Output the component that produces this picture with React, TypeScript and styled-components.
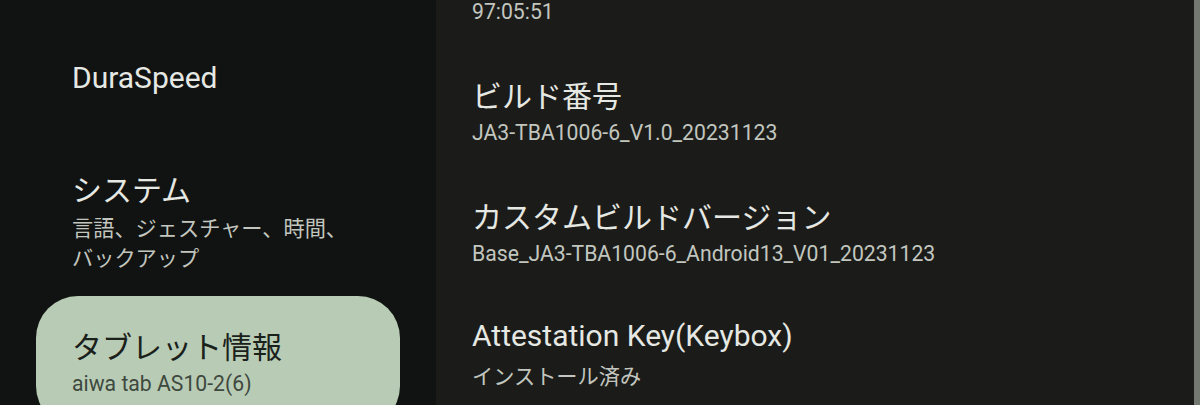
import React from "react";
import styled, { createGlobalStyle } from "styled-components";

const GlobalStyle = createGlobalStyle`
  html, body {
    margin: 0;
    padding: 0;
    background: #1b1c1a;
    overflow: hidden;
  }
  body {
    font-family: Roboto, "Noto Sans CJK JP", "Noto Sans", sans-serif;
    -webkit-font-smoothing: antialiased;
  }
`;

const latinStack = `Roboto, "Noto Sans CJK JP", "Noto Sans", sans-serif`;
const japaneseStack = `"Noto Sans CJK JP", Roboto, sans-serif`;

const isJapanese = (s: string) => /[\u3000-\u9fff]/.test(s);

const Screen = styled.div`
  display: flex;
  width: 1200px;
  height: 405px;
  overflow: hidden;
`;

const NavPane = styled.nav`
  width: 436px;
  flex: none;
  background: #111312;
  overflow: hidden;
`;

const NavList = styled.div`
  display: flex;
  flex-direction: column;
  gap: 10px;
  padding: 12px 36px 0;
`;

const NavItem = styled.div<{ $selected?: boolean }>`
  display: flex;
  flex-direction: column;
  justify-content: center;
  min-height: 132px;
  padding: 0 36px;
  box-sizing: border-box;
  border-radius: 42px;
  background: ${(p) => (p.$selected ? "#b8ccb5" : "transparent")};
`;

const Title = styled.div<{ $onCard?: boolean; $ja?: boolean }>`
  font-family: ${(p) => (p.$ja ? japaneseStack : latinStack)};
  font-size: 30px;
  line-height: 40px;
  font-weight: 400;
  color: ${(p) => (p.$onCard ? "#1a201a" : "#e6e8e3")};
  white-space: nowrap;
`;

const Summary = styled.div<{ $onCard?: boolean; $ja?: boolean }>`
  margin-top: 4px;
  font-family: ${(p) => (p.$ja ? japaneseStack : latinStack)};
  font-size: 21.2px;
  line-height: 30px;
  font-weight: 400;
  color: ${(p) => (p.$onCard ? "#3e483e" : "#c2c6bf")};
`;

const DetailPane = styled.main`
  flex: 1;
  display: flex;
  background: #1b1c1a;
  overflow: hidden;
`;

const DetailList = styled.div`
  flex: 1;
  display: flex;
  flex-direction: column;
  margin-top: -7px;
`;

const InfoRow = styled.div<{ $cut?: boolean }>`
  display: flex;
  flex-direction: column;
  padding: ${(p) => (p.$cut ? "0" : "23px")} 36px 24px;
`;

const ScrollThumb = styled.div`
  width: 6px;
  flex: none;
  background: #737870;
`;

type Item = { title: string; summary?: string[]; selected?: boolean };

const navItems: Item[] = [
  { title: "DuraSpeed" },
  { title: "システム", summary: ["言語、ジェスチャー、時間、", "バックアップ"] },
  { title: "タブレット情報", summary: ["aiwa tab AS10-2(6)"], selected: true },
];

// the first row is scrolled so that only its value remains in view
const infoRows: { title?: string; value: string }[] = [
  { value: "97:05:51" },
  { title: "ビルド番号", value: "JA3-TBA1006-6_V1.0_20231123" },
  { title: "カスタムビルドバージョン", value: "Base_JA3-TBA1006-6_Android13_V01_20231123" },
  { title: "Attestation Key(Keybox)", value: "インストール済み" },
];

export default function App() {
  return (
    <>
      <GlobalStyle />
      <Screen>
        <NavPane>
          <NavList>
            {navItems.map((it) => (
              <NavItem key={it.title} $selected={it.selected}>
                <Title $onCard={it.selected} $ja={isJapanese(it.title)}>
                  {it.title}
                </Title>
                {it.summary && (
                  <Summary $onCard={it.selected} $ja={isJapanese(it.summary.join(""))}>
                    {it.summary.map((line) => (
                      <div key={line}>{line}</div>
                    ))}
                  </Summary>
                )}
              </NavItem>
            ))}
          </NavList>
        </NavPane>
        <DetailPane>
          <DetailList>
            {infoRows.map((r) => (
              <InfoRow key={r.value} $cut={!r.title}>
                {r.title && <Title $ja={isJapanese(r.title)}>{r.title}</Title>}
                <Summary $ja={isJapanese(r.value)}>{r.value}</Summary>
              </InfoRow>
            ))}
          </DetailList>
          <ScrollThumb />
        </DetailPane>
      </Screen>
    </>
  );
}
